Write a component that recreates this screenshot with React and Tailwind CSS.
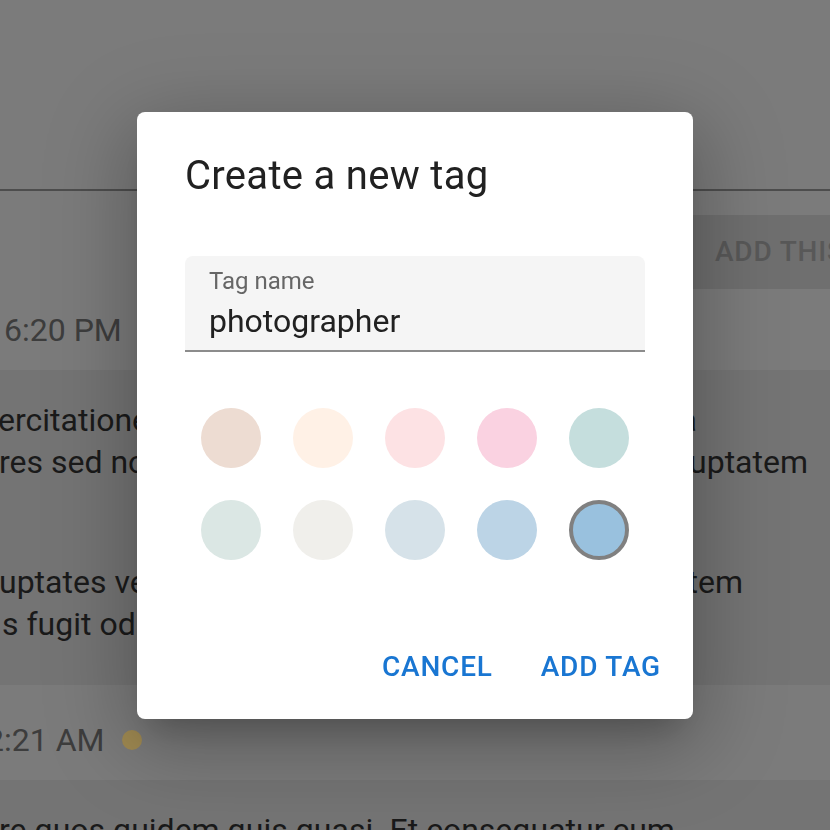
import React from "react";

const COLORS = [
  "#eddcd2",
  "#fff1e6",
  "#fde2e4",
  "#fad2e1",
  "#c5dedd",
  "#dbe7e4",
  "#f0efeb",
  "#d6e2e9",
  "#bcd4e6",
  "#99c1de",
];

function Line({ left, right, leftClass = "", rightClass = "" }) {
  return (
    <div className="flex whitespace-nowrap h-[42px] items-center">
      <span className={leftClass}>{left}</span>
      {right ? <span className={"ml-auto " + rightClass}>{right}</span> : null}
    </div>
  );
}

export default function App() {
  return (
    <div
      className="relative w-[830px] h-[830px] overflow-hidden bg-[#7b7b7b]"
      style={{ fontFamily: "Roboto, 'Liberation Sans', sans-serif" }}
    >
      {/* Background page (dimmed) */}
      <div className="flex flex-col">
        <div className="h-[189px]" />
        <div className="h-[2px] bg-[#4d4d4d]" />
        <div className="h-[24px]" />
        <div className="flex">
          <div className="ml-[683px] h-[74px] bg-[#6f6f6f] pl-[32px] flex items-center whitespace-nowrap text-[28px] font-medium tracking-[0.8px] text-[#585858] uppercase">
            Add this tag
          </div>
        </div>
        <div className="h-[81px] flex items-center text-[32px] text-[#3d3d3d] whitespace-nowrap">
          <span className="-ml-[14px]">16:20 PM</span>
        </div>
        <div className="h-[315px] bg-[#747474] pt-[29px] text-[32px] leading-[42px] text-[#1a1a1a]">
          <Line left="ercitationem ullam" leftClass="-ml-[2px]" right="ea" rightClass="mr-[133px]" />
          <Line left="res sed non numquam" leftClass="-ml-[1px]" right="voluptatem" rightClass="mr-[22px]" />
          <div className="h-[78px]" />
          <Line left="uptates velit esse" leftClass="-ml-[1px]" right="voluptatem" rightClass="mr-[87px]" />
          <Line left="s fugit odio aut" leftClass="ml-[2px]" />
        </div>
        <div className="h-[95px] pt-[14px] flex items-center text-[32px] text-[#3d3d3d] whitespace-nowrap">
          <span className="-ml-[32px]">12:21 AM</span>
          <span className="ml-[18px] w-[20px] h-[20px] rounded-full bg-[#a08a52]" />
        </div>
        <div className="h-[200px] bg-[#747474] pt-[29px] text-[32px] leading-[42px] text-[#1a1a1a]">
          <Line left="re quos quidem quis quasi. Et consequatur cum" leftClass="-ml-[1px]" />
        </div>
      </div>

      {/* Dialog */}
      <div className="fixed inset-0 flex items-center justify-center">
        <div className="w-[556px] bg-white rounded-[8px] shadow-[0_22px_76px_6px_rgba(0,0,0,0.14),0_18px_92px_16px_rgba(0,0,0,0.12),0_22px_30px_-14px_rgba(0,0,0,0.2)] flex flex-col">
          <div className="px-[48px] pt-[32px] pb-[32px] text-[40px] leading-[64px] tracking-[0.3px] text-[#212121]">
            Create a new tag
          </div>
          <div className="px-[48px] pb-[40px]">
            <div className="mt-[16px] relative bg-[#f5f5f5] rounded-t-[8px] border-b-2 border-[#8c8c8c] pt-[42px] pb-[6px] px-[24px]">
              <label className="absolute left-[24px] top-[8px] text-[24px] leading-[34px] text-[#666666]">
                Tag name
              </label>
              <input
                readOnly
                value="photographer"
                className="block w-full h-[46px] text-[32px] text-[#212121] bg-transparent outline-none"
                style={{ fontFamily: "Roboto, 'Liberation Sans', sans-serif" }}
              />
            </div>
            <div className="mt-[40px] grid grid-cols-5">
              {COLORS.map((c, i) => (
                <div key={c} className="h-[92px] flex items-center justify-center">
                  <div
                    className={
                      "w-[60px] h-[60px] rounded-full" +
                      (i === 9 ? " border-4 border-[#808080]" : "")
                    }
                    style={{ backgroundColor: c }}
                  />
                </div>
              ))}
            </div>
          </div>
          <div className="flex justify-end items-center p-[16px] gap-[16px]">
            <button className="h-[71px] px-[16px] text-[28px] font-medium tracking-[0.8px] uppercase text-[#1976d2] rounded-[8px]">
              Cancel
            </button>
            <button className="h-[71px] px-[16px] text-[28px] font-medium tracking-[0.8px] uppercase text-[#1976d2] rounded-[8px]">
              Add tag
            </button>
          </div>
        </div>
      </div>
    </div>
  );
}
